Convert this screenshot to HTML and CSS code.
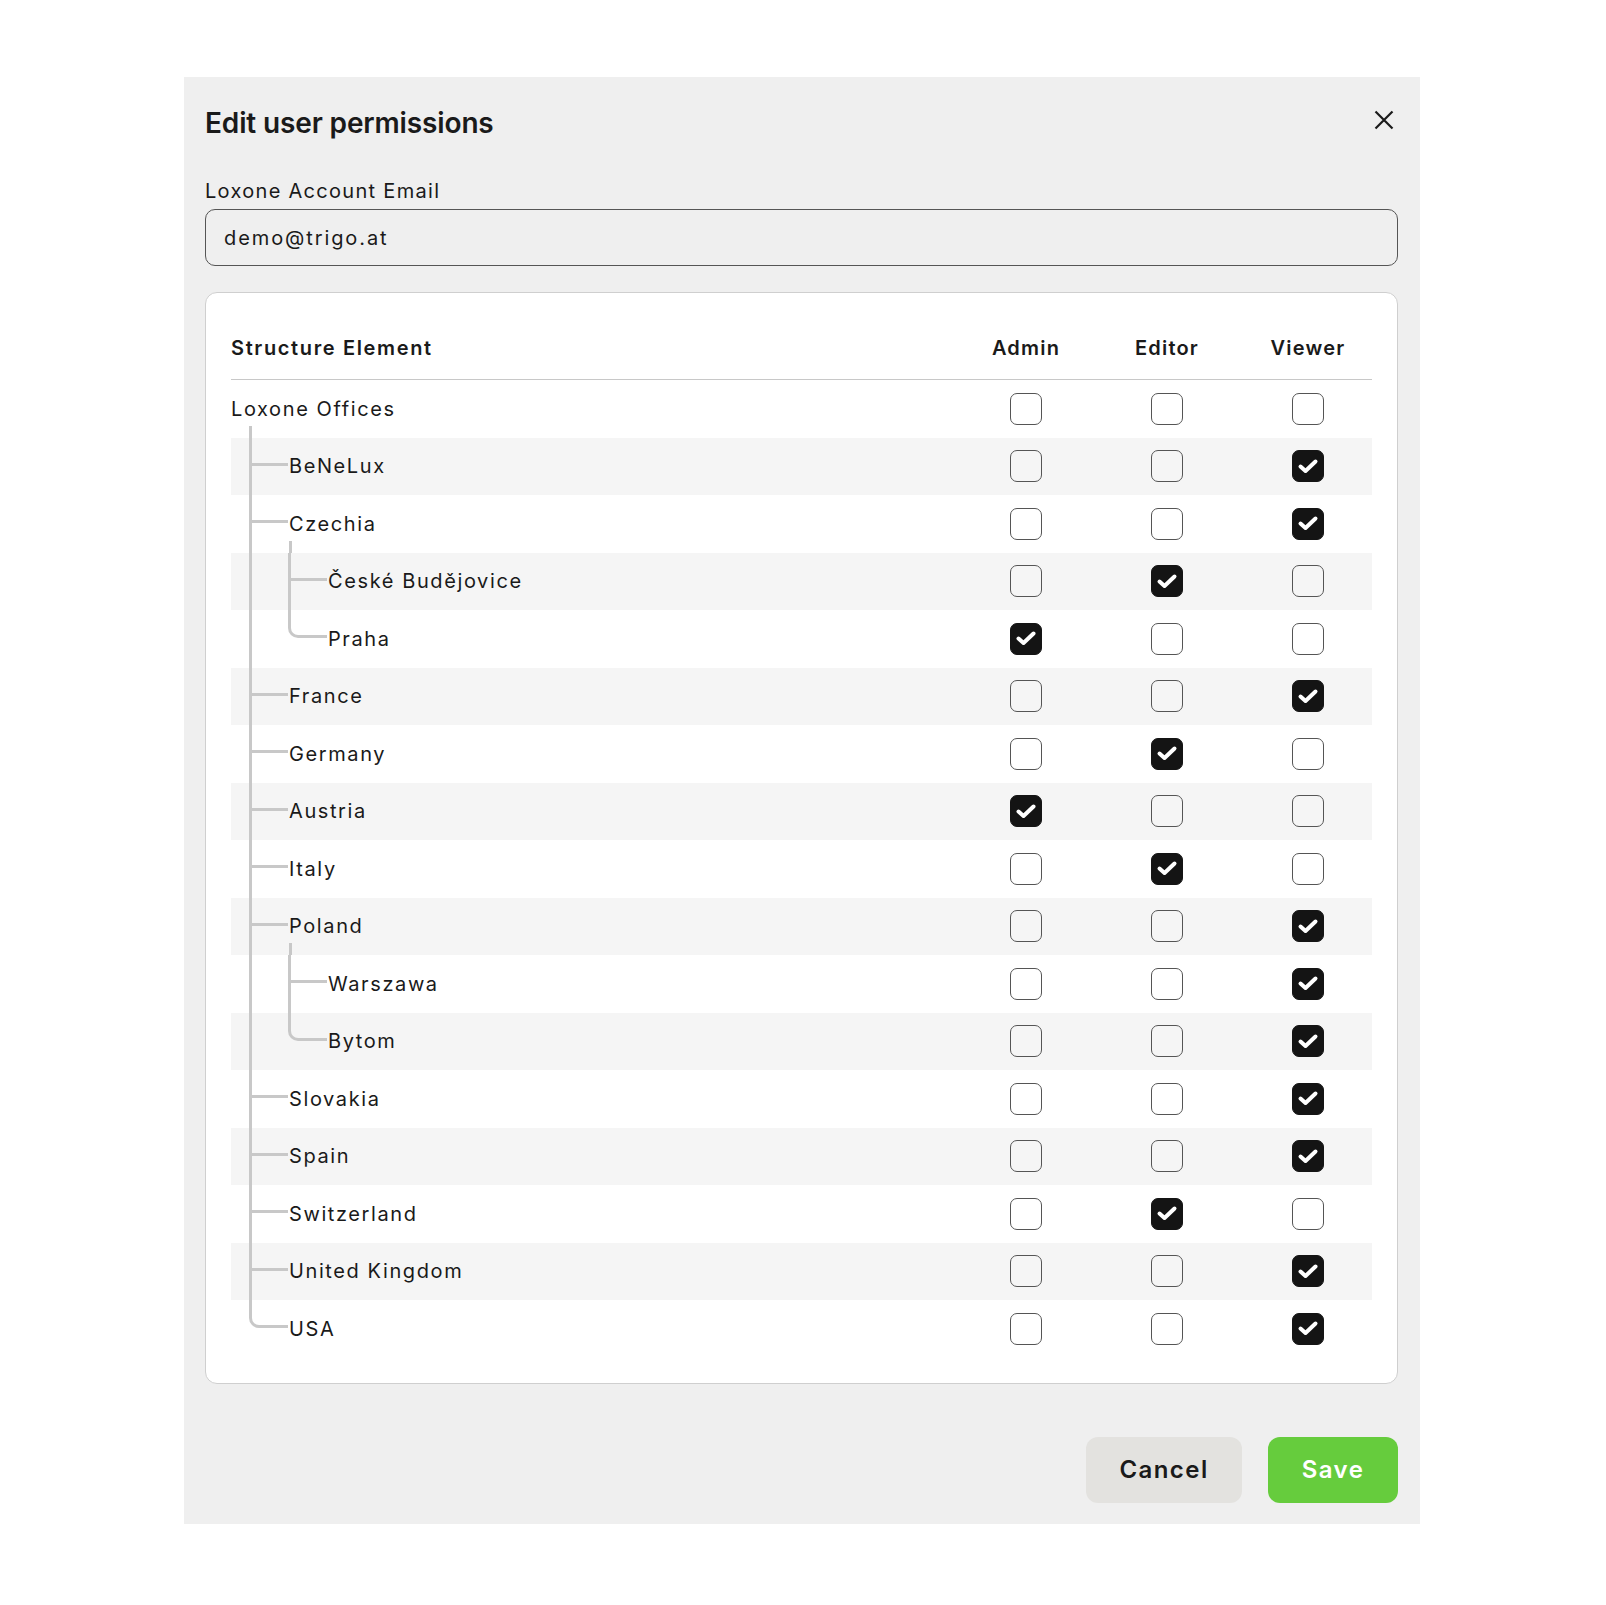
FILE: index.html
```html
<!DOCTYPE html>
<html lang="en">
<head>
<meta charset="utf-8">
<title>Edit user permissions</title>
<link rel="stylesheet" href="styles.css">
</head>
<body>
<div class="dialog">
  <div class="header">
    <h1 class="title">Edit user permissions</h1>
    <button class="close" aria-label="Close">
      <svg width="24" height="24" viewBox="0 0 24 24"><path d="M3.5 3.5L20.5 20.5M20.5 3.5L3.5 20.5" stroke="#1a1a1a" stroke-width="2.2" fill="none"/></svg>
    </button>
  </div>

  <label class="field-label">Loxone Account Email</label>
  <div class="input">demo@trigo.at</div>

  <div class="card">
    <div class="thead">
      <div class="th th-name">Structure Element</div>
      <div class="th">Admin</div>
      <div class="th">Editor</div>
      <div class="th">Viewer</div>
    </div>

    <div class="row kids0">
      <div class="name"><span class="label">Loxone Offices</span></div>
      <div class="cell"><span class="cb"></span></div>
      <div class="cell"><span class="cb"></span></div>
      <div class="cell"><span class="cb"></span></div>
    </div>

    <div class="row stripe">
      <div class="name"><span class="indent"></span><span class="tee"></span><span class="label">BeNeLux</span></div>
      <div class="cell"><span class="cb"></span></div>
      <div class="cell"><span class="cb"></span></div>
      <div class="cell"><span class="cb on"><svg viewBox="0 0 32 32"><path d="M8.5 16.5L13.5 21L23.5 11.5"/></svg></span></div>
    </div>

    <div class="row kids1">
      <div class="name"><span class="indent"></span><span class="tee"></span><span class="label">Czechia</span></div>
      <div class="cell"><span class="cb"></span></div>
      <div class="cell"><span class="cb"></span></div>
      <div class="cell"><span class="cb on"><svg viewBox="0 0 32 32"><path d="M8.5 16.5L13.5 21L23.5 11.5"/></svg></span></div>
    </div>

    <div class="row stripe">
      <div class="name"><span class="indent"></span><span class="pipe"></span><span class="tee"></span><span class="label">České Budějovice</span></div>
      <div class="cell"><span class="cb"></span></div>
      <div class="cell"><span class="cb on"><svg viewBox="0 0 32 32"><path d="M8.5 16.5L13.5 21L23.5 11.5"/></svg></span></div>
      <div class="cell"><span class="cb"></span></div>
    </div>

    <div class="row">
      <div class="name"><span class="indent"></span><span class="pipe"></span><span class="elbow"></span><span class="label">Praha</span></div>
      <div class="cell"><span class="cb on"><svg viewBox="0 0 32 32"><path d="M8.5 16.5L13.5 21L23.5 11.5"/></svg></span></div>
      <div class="cell"><span class="cb"></span></div>
      <div class="cell"><span class="cb"></span></div>
    </div>

    <div class="row stripe">
      <div class="name"><span class="indent"></span><span class="tee"></span><span class="label">France</span></div>
      <div class="cell"><span class="cb"></span></div>
      <div class="cell"><span class="cb"></span></div>
      <div class="cell"><span class="cb on"><svg viewBox="0 0 32 32"><path d="M8.5 16.5L13.5 21L23.5 11.5"/></svg></span></div>
    </div>

    <div class="row">
      <div class="name"><span class="indent"></span><span class="tee"></span><span class="label">Germany</span></div>
      <div class="cell"><span class="cb"></span></div>
      <div class="cell"><span class="cb on"><svg viewBox="0 0 32 32"><path d="M8.5 16.5L13.5 21L23.5 11.5"/></svg></span></div>
      <div class="cell"><span class="cb"></span></div>
    </div>

    <div class="row stripe">
      <div class="name"><span class="indent"></span><span class="tee"></span><span class="label">Austria</span></div>
      <div class="cell"><span class="cb on"><svg viewBox="0 0 32 32"><path d="M8.5 16.5L13.5 21L23.5 11.5"/></svg></span></div>
      <div class="cell"><span class="cb"></span></div>
      <div class="cell"><span class="cb"></span></div>
    </div>

    <div class="row">
      <div class="name"><span class="indent"></span><span class="tee"></span><span class="label">Italy</span></div>
      <div class="cell"><span class="cb"></span></div>
      <div class="cell"><span class="cb on"><svg viewBox="0 0 32 32"><path d="M8.5 16.5L13.5 21L23.5 11.5"/></svg></span></div>
      <div class="cell"><span class="cb"></span></div>
    </div>

    <div class="row stripe kids1">
      <div class="name"><span class="indent"></span><span class="tee"></span><span class="label">Poland</span></div>
      <div class="cell"><span class="cb"></span></div>
      <div class="cell"><span class="cb"></span></div>
      <div class="cell"><span class="cb on"><svg viewBox="0 0 32 32"><path d="M8.5 16.5L13.5 21L23.5 11.5"/></svg></span></div>
    </div>

    <div class="row">
      <div class="name"><span class="indent"></span><span class="pipe"></span><span class="tee"></span><span class="label">Warszawa</span></div>
      <div class="cell"><span class="cb"></span></div>
      <div class="cell"><span class="cb"></span></div>
      <div class="cell"><span class="cb on"><svg viewBox="0 0 32 32"><path d="M8.5 16.5L13.5 21L23.5 11.5"/></svg></span></div>
    </div>

    <div class="row stripe">
      <div class="name"><span class="indent"></span><span class="pipe"></span><span class="elbow"></span><span class="label">Bytom</span></div>
      <div class="cell"><span class="cb"></span></div>
      <div class="cell"><span class="cb"></span></div>
      <div class="cell"><span class="cb on"><svg viewBox="0 0 32 32"><path d="M8.5 16.5L13.5 21L23.5 11.5"/></svg></span></div>
    </div>

    <div class="row">
      <div class="name"><span class="indent"></span><span class="tee"></span><span class="label">Slovakia</span></div>
      <div class="cell"><span class="cb"></span></div>
      <div class="cell"><span class="cb"></span></div>
      <div class="cell"><span class="cb on"><svg viewBox="0 0 32 32"><path d="M8.5 16.5L13.5 21L23.5 11.5"/></svg></span></div>
    </div>

    <div class="row stripe">
      <div class="name"><span class="indent"></span><span class="tee"></span><span class="label">Spain</span></div>
      <div class="cell"><span class="cb"></span></div>
      <div class="cell"><span class="cb"></span></div>
      <div class="cell"><span class="cb on"><svg viewBox="0 0 32 32"><path d="M8.5 16.5L13.5 21L23.5 11.5"/></svg></span></div>
    </div>

    <div class="row">
      <div class="name"><span class="indent"></span><span class="tee"></span><span class="label">Switzerland</span></div>
      <div class="cell"><span class="cb"></span></div>
      <div class="cell"><span class="cb on"><svg viewBox="0 0 32 32"><path d="M8.5 16.5L13.5 21L23.5 11.5"/></svg></span></div>
      <div class="cell"><span class="cb"></span></div>
    </div>

    <div class="row stripe">
      <div class="name"><span class="indent"></span><span class="tee"></span><span class="label">United Kingdom</span></div>
      <div class="cell"><span class="cb"></span></div>
      <div class="cell"><span class="cb"></span></div>
      <div class="cell"><span class="cb on"><svg viewBox="0 0 32 32"><path d="M8.5 16.5L13.5 21L23.5 11.5"/></svg></span></div>
    </div>

    <div class="row">
      <div class="name"><span class="indent"></span><span class="elbow"></span><span class="label">USA</span></div>
      <div class="cell"><span class="cb"></span></div>
      <div class="cell"><span class="cb"></span></div>
      <div class="cell"><span class="cb on"><svg viewBox="0 0 32 32"><path d="M8.5 16.5L13.5 21L23.5 11.5"/></svg></span></div>
    </div>
  </div>

  <div class="actions">
    <button class="btn btn-cancel">Cancel</button>
    <button class="btn btn-save">Save</button>
  </div>
</div>
</body>
</html>
```

FILE: styles.css
```css
* { box-sizing: border-box; }

html, body {
  margin: 0;
  padding: 0;
  background: #ffffff;
}

body {
  font-family: Inter, "Noto Sans", "DejaVu Sans", sans-serif;
  color: #1a1a1a;
}

.dialog {
  margin: 77px 0 0 184px;
  width: 1236px;
  background: #efefef;
  padding: 26px 22px 21px 21px;
  display: flex;
  flex-direction: column;
}

.header {
  display: flex;
  justify-content: space-between;
  align-items: flex-start;
  height: 40px;
}

.title {
  margin: 0;
  font-size: 28px;
  line-height: 40px;
  font-weight: 600;
  letter-spacing: -0.005em;
  color: #1a1a1a;
}

.close {
  margin: 5px 2px 0 0;
  padding: 0;
  border: 0;
  background: transparent;
  width: 24px;
  height: 24px;
  display: block;
}

.close svg { display: block; }

.field-label {
  display: block;
  margin-top: 34px;
  font-size: 20px;
  line-height: 28px;
  letter-spacing: 0.065em;
  color: #1a1a1a;
}

.input {
  margin-top: 4px;
  height: 57px;
  border: 1.5px solid #555555;
  border-radius: 10px;
  padding: 0 18px;
  display: flex;
  align-items: center;
  font-size: 20px;
  letter-spacing: 0.095em;
  color: #1a1a1a;
}

.card {
  margin-top: 26px;
  background: #ffffff;
  border: 1px solid #cfcfcf;
  border-radius: 12px;
  padding: 24px 25px 25px 25px;
}

.thead,
.row {
  display: grid;
  grid-template-columns: 1fr 128px 128px 128px;
  column-gap: 13px;
}

.thead {
  height: 63px;
  align-items: center;
  border-bottom: 1px solid #c8c8c8;
}

.th {
  font-size: 20px;
  line-height: 28px;
  font-weight: 600;
  letter-spacing: 0.06em;
  text-align: center;
  color: #1a1a1a;
}

.th-name {
  text-align: left;
  letter-spacing: 0.082em;
}

.row {
  height: 57.5px;
  align-items: stretch;
}

.row.stripe { background: #f5f5f5; }

.name {
  position: relative;
  display: flex;
  align-items: stretch;
}

.label {
  align-self: center;
  font-size: 20px;
  line-height: 28px;
  letter-spacing: 0.08em;
  color: #1a1a1a;
  white-space: nowrap;
}

.indent {
  flex: 0 0 18px;
}

.pipe {
  flex: 0 0 39px;
  border-left: 3px solid #c8c8c8;
}

.tee {
  flex: 0 0 40px;
  position: relative;
  border-left: 3px solid #c8c8c8;
}

.tee::after {
  content: "";
  position: absolute;
  left: 0;
  right: 1px;
  top: calc(50% - 3.5px);
  height: 3px;
  background: #c8c8c8;
}

.elbow {
  flex: 0 0 39px;
  align-self: flex-start;
  height: calc(50% - 0.5px);
  margin-right: 1px;
  border-left: 3px solid #c8c8c8;
  border-bottom: 3px solid #c8c8c8;
  border-bottom-left-radius: 10px;
}

.kids0 .name::after,
.kids1 .name::after {
  content: "";
  position: absolute;
  bottom: 0;
  height: 12px;
  width: 3px;
  background: #c8c8c8;
}

.kids0 .name::after { left: 18px; }
.kids1 .name::after { left: 58px; }

.cell {
  display: flex;
  align-items: center;
  justify-content: center;
}

.cb {
  width: 32px;
  height: 32px;
  border: 1.5px solid #555555;
  border-radius: 7px;
  display: block;
}

.cb.on {
  background: #141414;
  border-color: #141414;
}

.cb svg {
  display: block;
  width: 32px;
  height: 32px;
  margin: -1.5px;
}

.cb svg path {
  fill: none;
  stroke: #ffffff;
  stroke-width: 4;
  stroke-linecap: round;
  stroke-linejoin: round;
}

.actions {
  margin-top: 53px;
  display: flex;
  justify-content: flex-end;
  gap: 26px;
}

.btn {
  height: 66px;
  border: 0;
  border-radius: 12px;
  font-family: Inter, "Noto Sans", "DejaVu Sans", sans-serif;
  font-size: 24px;
  font-weight: 600;
  letter-spacing: 0.06em;
  padding: 0;
}

.btn-cancel {
  width: 156px;
  background: #e3e2df;
  color: #1a1a1a;
}

.btn-save {
  width: 130px;
  background: #66cc3d;
  color: #ffffff;
}
```
